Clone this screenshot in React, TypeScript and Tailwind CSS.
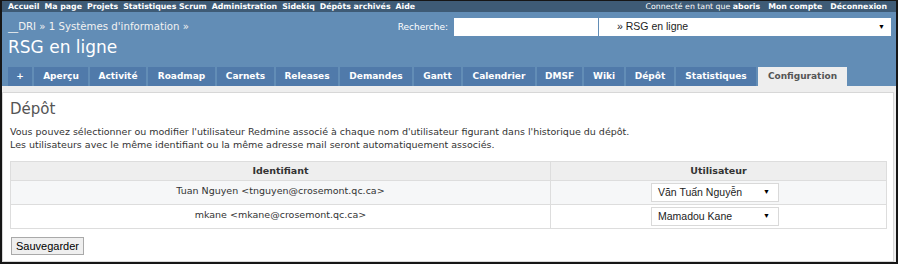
const verdana = "font-['DejaVu_Sans',Verdana,sans-serif]";
const arial = "font-['Liberation_Sans',Arial,sans-serif]";

const leftMenu = ['Accueil', 'Ma page', 'Projets', 'Statistiques Scrum', 'Administration', 'Sidekiq', 'Dépôts archivés', 'Aide'];

// tab label + fixed width, measured off the reference
const tabs: [string, string][] = [
  ['+', 'w-[24px]'],
  ['Aperçu', 'w-[54px]'],
  ['Activité', 'w-[56px]'],
  ['Roadmap', 'w-[67px]'],
  ['Carnets', 'w-[57px]'],
  ['Releases', 'w-[62px]'],
  ['Demandes', 'w-[72px]'],
  ['Gantt', 'w-[47px]'],
  ['Calendrier', 'w-[72px]'],
  ['DMSF', 'w-[45px]'],
  ['Wiki', 'w-[40px]'],
  ['Dépôt', 'w-[48px]'],
  ['Statistiques', 'w-[80px]'],
];

const rows = [
  { ident: 'Tuan Nguyen <tnguyen@crosemont.qc.ca>', user: 'Văn Tuấn Nguyễn', odd: true },
  { ident: 'mkane <mkane@crosemont.qc.ca>', user: 'Mamadou Kane', odd: false },
];

function FakeSelect({ label }: { label: string }) {
  return (
    <div className={`flex h-[19px] w-[128px] items-center justify-between border border-[#d9d9d9] bg-white pl-[6px] pr-[8px] text-[10.5px] text-[#222] ${arial}`}>
      <span>{label}</span>
      <span className="text-[7px] text-black">▼</span>
    </div>
  );
}

export default function App() {
  return (
    <div className="h-[266px] w-[900px] bg-white">
      <div className="flex h-[264px] w-[898px] flex-col overflow-hidden border-t border-r-2 border-b-2 border-l-2 border-[#161616]">
        {/* top menu */}
        <div className={`flex h-[11px] shrink-0 items-center justify-between bg-[#3e5b76] pl-[6px] pr-[9px] text-[7.8px] leading-none font-bold text-white ${verdana}`}>
          <div className="flex gap-[5px]">
            {leftMenu.map((item) => (
              <span key={item}>{item}</span>
            ))}
          </div>
          <div className="flex gap-[8px]">
            <span>
              <span className="font-normal">Connecté en tant que </span>aboris
            </span>
            <span>Mon compte</span>
            <span>Déconnexion</span>
          </div>
        </div>

        {/* header */}
        <div className="flex h-[74px] shrink-0 flex-col bg-[#628db6] pl-[6px]">
          <div className="flex h-[55px] justify-between">
            <div className={`pt-[9px] text-white ${verdana}`}>
              <div className="text-[10.2px] leading-[12px] text-[#f2f2f2]">__DRI » 1 Systèmes d'information »</div>
              <div className="mt-[3px] text-[17px] leading-[22px]">RSG en ligne</div>
            </div>
            <div className="flex items-start gap-[6px] pt-[6px] pr-[5px]">
              <span className={`mt-[4px] text-[9px] leading-[11px] text-white ${verdana}`}>Recherche:</span>
              <div className="h-[18px] w-[144px] bg-white" />
              <div className={`-ml-[5px] flex h-[18px] w-[292px] items-center justify-between bg-white pl-[18px] pr-[6px] text-[10.5px] text-[#222] ${arial}`}>
                <span>» RSG en ligne</span>
                <span className="text-[7px] text-black">▼</span>
              </div>
            </div>
          </div>
          <div className={`flex h-[19px] gap-[2px] text-[9px] font-bold ${verdana}`}>
            {tabs.map(([label, width]) => (
              <div key={label} className={`flex items-center justify-center bg-[#507aaa] text-white ${width}`}>
                {label}
              </div>
            ))}
            <div className="flex w-[89px] items-center justify-center bg-[#eeeeee] text-[#555]">Configuration</div>
          </div>
        </div>

        {/* main */}
        <div className="flex flex-1 flex-col bg-[#eeeeee] pt-[6px] pr-[2px]">
          <div className={`flex-1 border border-[#d7d7d7] bg-white px-[7px] pt-[7px] text-[#333] ${verdana}`}>
            <h2 className="text-[15px] leading-[18px] text-[#555]">Dépôt</h2>
            <p className="mt-[7px] text-[9.5px] leading-[13px]">
              Vous pouvez sélectionner ou modifier l'utilisateur Redmine associé à chaque nom d'utilisateur figurant dans l'historique du dépôt.
              <br />
              Les utilisateurs avec le même identifiant ou la même adresse mail seront automatiquement associés.
            </p>
            <table className="mt-[10px] w-[877px] border-collapse border border-[#dddddd] text-[9.5px]">
              <thead>
                <tr className="h-[19px] bg-[#eeeeee]">
                  <th className="w-[540px] border border-[#dddddd] font-bold text-[#333]">Identifiant</th>
                  <th className="border border-[#dddddd] font-bold text-[#333]">Utilisateur</th>
                </tr>
              </thead>
              <tbody>
                {rows.map((row) => (
                  <tr key={row.ident} className={`h-[24px] ${row.odd ? 'bg-[#f6f7f8]' : 'bg-white'}`}>
                    <td className="border border-[#dddddd] pt-[3px] text-center align-top">{row.ident}</td>
                    <td className="border border-[#dddddd] py-[1px] pl-[100px]">
                      <FakeSelect label={row.user} />
                    </td>
                  </tr>
                ))}
              </tbody>
            </table>
            <button
              className={`mt-[8px] ml-[1px] h-[18px] border border-[#a9a9a9] bg-[#efefef] px-[4px] text-[11px] leading-none text-black ${arial}`}
              type="button"
            >
              Sauvegarder
            </button>
          </div>
        </div>
      </div>
    </div>
  );
}
